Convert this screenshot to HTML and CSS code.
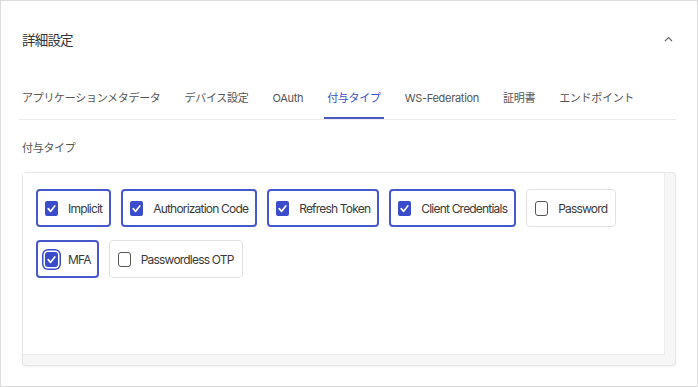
FILE: index.html
```html
<!DOCTYPE html>
<html lang="ja">
<head>
    <meta charset="UTF-8">
    <meta name="viewport" content="width=device-width, initial-scale=1.0">
    <title>詳細設定</title>
    <link rel="stylesheet" href="styles.css">
</head>
<body>
    <div class="page">
        <div class="panel-header">
            <h2>詳細設定</h2>
            <button class="collapse-toggle" aria-label="折りたたむ">
                <svg width="9" height="6" viewBox="0 0 9 6"><polyline points="1,5 4.5,1.5 8,5" fill="none" stroke="#666" stroke-width="1.1"/></svg>
            </button>
        </div>

        <nav class="tabs">
            <a href="#" class="tab">アプリケーションメタデータ</a>
            <a href="#" class="tab">デバイス設定</a>
            <a href="#" class="tab">OAuth</a>
            <a href="#" class="tab active">付与タイプ</a>
            <a href="#" class="tab">WS-Federation</a>
            <a href="#" class="tab">証明書</a>
            <a href="#" class="tab">エンドポイント</a>
        </nav>

        <div class="field-label">付与タイプ</div>

        <div class="grant-box">
            <div class="grant-list">
                <label class="grant checked"><span class="box"><svg viewBox="0 0 13 14"><polyline points="3.2,7.2 5.6,9.8 9.8,4.4"/></svg></span>Implicit</label>
                <label class="grant checked"><span class="box"><svg viewBox="0 0 13 14"><polyline points="3.2,7.2 5.6,9.8 9.8,4.4"/></svg></span>Authorization Code</label>
                <label class="grant checked"><span class="box"><svg viewBox="0 0 13 14"><polyline points="3.2,7.2 5.6,9.8 9.8,4.4"/></svg></span>Refresh Token</label>
                <label class="grant checked"><span class="box"><svg viewBox="0 0 13 14"><polyline points="3.2,7.2 5.6,9.8 9.8,4.4"/></svg></span>Client Credentials</label>
                <label class="grant"><span class="box"></span>Password</label>
                <label class="grant checked focused"><span class="box"><svg viewBox="0 0 13 14"><polyline points="3.2,7.2 5.6,9.8 9.8,4.4"/></svg></span>MFA</label>
                <label class="grant"><span class="box"></span>Passwordless OTP</label>
            </div>
        </div>
    </div>
</body>
</html>
```

FILE: styles.css
```css
* {
    margin: 0;
    padding: 0;
    box-sizing: border-box;
}

body {
    font-family: Inter, "Noto Sans CJK JP", sans-serif;
    background: #fff;
    color: #333;
}

.page {
    height: 387px;
    border: 1px solid #dcdcdc;
    padding: 0 21px;
}

.panel-header {
    display: flex;
    justify-content: space-between;
    align-items: center;
    height: 24px;
    margin-top: 26px;
    padding-right: 3px;
}

.panel-header h2 {
    font-family: "Noto Sans CJK JP", sans-serif;
    font-size: 13.5px;
    font-weight: 400;
    letter-spacing: -0.8px;
    color: #333;
}

.collapse-toggle {
    background: none;
    border: none;
    display: flex;
    cursor: pointer;
}

.tabs {
    display: flex;
    gap: 18px;
    margin: 27px 0 0 -3px;
    border-bottom: 1px solid #ececec;
}

.tab {
    padding: 10px 3px 9px;
    line-height: 20px;
    border-bottom: 2px solid transparent;
    font-family: Inter, "Noto Sans CJK JP", sans-serif;
    font-size: 11px;
    letter-spacing: -0.3px;
    color: #555;
    text-decoration: none;
}

.tab.active {
    color: #3d4fc4;
    border-bottom-color: #4a5ac0;
}

.field-label {
    margin-top: 19px;
    line-height: 16px;
    font-family: "Noto Sans CJK JP", sans-serif;
    font-size: 11px;
    letter-spacing: -0.3px;
    color: #555;
}

.grant-box {
    height: 194px;
    margin-top: 17px;
    border: 1px solid #e6e6e6;
    border-radius: 4px;
    background: #f6f6f6;
    box-shadow: 0 1px 2px rgba(0, 0, 0, 0.06);
    padding: 0 10px 10px 0;
}

.grant-list {
    height: 100%;
    background: #fff;
    border-right: 1px solid #ececec;
    border-bottom: 1px solid #ececec;
    padding: 16px 13px;
    display: flex;
    flex-wrap: wrap;
    align-content: flex-start;
    gap: 13px 10px;
}

.grant {
    display: flex;
    align-items: center;
    gap: 10px;
    height: 38px;
    padding: 0 8px;
    border: 1px solid #e2e2e2;
    border-radius: 4px;
    font-size: 12px;
    letter-spacing: -0.8px;
    color: #3a3a3a;
    cursor: pointer;
}

.grant.checked {
    border: 2px solid #4858cc;
    padding: 0 7px;
}

.box {
    width: 13px;
    height: 15px;
    border: 1.5px solid #555;
    border-radius: 3px;
    background: #fff;
    display: flex;
}

.grant.checked .box {
    border: none;
    background: #3a4bcb;
    border-radius: 2px;
}

.box svg {
    width: 13px;
    height: 15px;
}

.box polyline {
    fill: none;
    stroke: #fff;
    stroke-width: 1.7;
    stroke-linecap: round;
    stroke-linejoin: round;
}

.grant.focused {
    padding-right: 6px;
}

.grant.focused .box {
    box-shadow: 0 0 0 1.5px #fff, 0 0 0 3px #3a4bcb;
    border-radius: 3px;
}
```
